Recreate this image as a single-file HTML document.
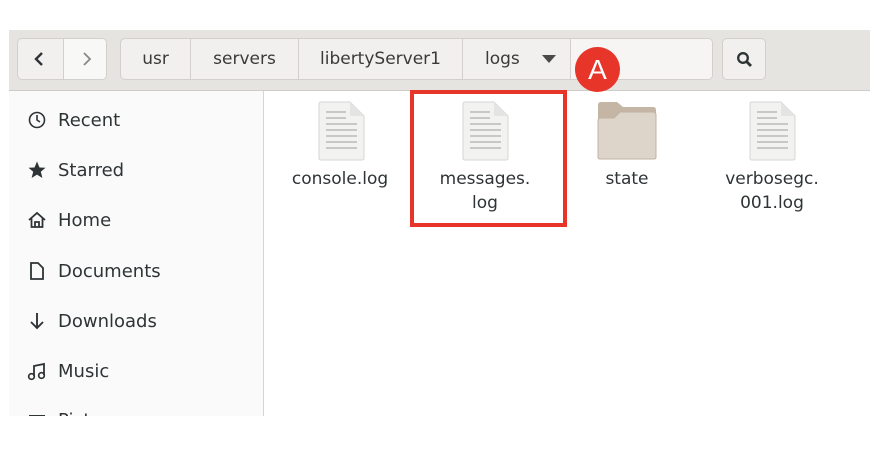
<!DOCTYPE html>
<html><head><style>
*{margin:0;padding:0;box-sizing:border-box}
body{width:870px;height:462px;background:#fff;position:relative;overflow:hidden;font-family:"DejaVu Sans","Liberation Sans",sans-serif;color:#2e3436}
.hdr{position:absolute;left:9px;top:30px;width:861px;height:61px;background:#e6e4e1;border-bottom:1px solid #cfcbc6}
.btn{position:absolute;top:8px;height:42px;background:#f1f0ee;border:1px solid #d3cfca;border-radius:5px}
.seg{position:absolute;top:0;height:40px;border-right:1px solid #d3cfca;font-size:17px;line-height:40px;text-align:center;color:#3a3a3a}
.side{position:absolute;left:9px;top:91px;width:255px;height:325px;background:#fafafa;border-right:1px solid #d8d4d0;overflow:hidden}
.it{position:absolute;left:0;font-size:18px;color:#2e3436}
.it span{position:absolute;left:49px;top:0;white-space:nowrap}
.it svg{position:absolute;left:18px;top:0}
.lbl{position:absolute;font-size:17px;text-align:center;line-height:24px;color:#2e3436}
</style></head><body>
<div class="hdr">
 <div class="btn" style="left:8px;width:90px;overflow:hidden">
  <div style="position:absolute;left:45px;top:0;width:45px;height:40px;background:#f8f8f7;border-left:1px solid #d3cfca"></div>
  <svg style="position:absolute;left:14px;top:12px" width="16" height="16"><path d="M10 2 L4 8 L10 14" stroke="#2e3436" stroke-width="2.4" fill="none"/></svg>
  <svg style="position:absolute;left:61px;top:12px" width="16" height="16"><path d="M5 2 L11 8 L5 14" stroke="#888" stroke-width="1.8" fill="none"/></svg>
 </div>
 <div class="btn" style="left:111px;width:593px;overflow:hidden">
  <div class="seg" style="left:0;width:70px">usr</div>
  <div class="seg" style="left:70px;width:108px">servers</div>
  <div class="seg" style="left:178px;width:164px">libertyServer1</div>
  <div class="seg" style="left:342px;width:108px;text-align:left;padding-left:22px">logs<svg style="position:absolute;left:79px;top:16px" width="14" height="9"><path d="M0 0 L14 0 L7 8Z" fill="#4a4a4a"/></svg></div>
  <div style="position:absolute;left:450px;top:0;width:143px;height:40px;background:#f6f5f4"></div>
 </div>
 <div class="btn" style="left:713px;width:44px">
  <svg style="position:absolute;left:13px;top:12px" width="18" height="18"><circle cx="7" cy="7" r="4.8" stroke="#2e3436" stroke-width="2.3" fill="none"/><path d="M10.5 10.5 L15 15" stroke="#2e3436" stroke-width="2.8"/></svg>
 </div>
</div>
<div class="side">
 <div class="it" style="top:19px"><svg width="20" height="20"><circle cx="10" cy="10" r="7.5" stroke="#2e3436" stroke-width="1.6" fill="none"/><path d="M10 5 V10 L13 12" stroke="#2e3436" stroke-width="1.6" fill="none"/></svg><span>Recent</span></div>
 <div class="it" style="top:69px"><svg width="20" height="20"><path d="M10 1.5 L12.5 7.5 L18.5 7.8 L13.8 11.8 L15.4 18 L10 14.6 L4.6 18 L6.2 11.8 L1.5 7.8 L7.5 7.5Z" fill="#2e3436"/></svg><span>Starred</span></div>
 <div class="it" style="top:119px"><svg width="20" height="20"><path d="M2 10 L10 3 L18 10 M4.5 8.5 V17 H15.5 V8.5 M8 17 V12 H12 V17" stroke="#2e3436" stroke-width="1.8" fill="none"/></svg><span>Home</span></div>
 <div class="it" style="top:170px"><svg width="20" height="20"><path d="M4 2 H11 L16 7 V18 H4Z" stroke="#2e3436" stroke-width="1.8" fill="none"/></svg><span>Documents</span></div>
 <div class="it" style="top:220px"><svg width="20" height="20"><path d="M10 2 V17 M4 11 L10 17 L16 11" stroke="#2e3436" stroke-width="1.9" fill="none"/></svg><span>Downloads</span></div>
 <div class="it" style="top:270px"><svg width="20" height="20"><path d="M7 15 V5 L17 3 V14" stroke="#2e3436" stroke-width="1.8" fill="none"/><circle cx="4.5" cy="15.5" r="2.8" stroke="#2e3436" stroke-width="1.7" fill="none"/><circle cx="14.5" cy="14.5" r="2.8" stroke="#2e3436" stroke-width="1.7" fill="none"/></svg><span>Music</span></div>
 <div class="it" style="top:319px"><svg width="20" height="20"><rect x="2" y="5" width="16" height="12" fill="#2e3436"/></svg><span>Pictures</span></div>
</div>
<svg style="position:absolute;left:318px;top:101px" width="47" height="60"><path d="M1 3 Q1 1 3 1 H32 L46 15 V57 Q46 59 44 59 H3 Q1 59 1 57Z" fill="#f2f2f1" stroke="#d6d6d4"/><path d="M32 1 V15 H46" fill="#e4e4e2"/><g stroke="#c8c8c6" stroke-width="2"><path d="M8 11H28M8 17H28M8 23H39M8 29H39M8 35H39M8 41H39M8 47H39"/></g></svg>
<svg style="position:absolute;left:462px;top:101px" width="47" height="60"><path d="M1 3 Q1 1 3 1 H32 L46 15 V57 Q46 59 44 59 H3 Q1 59 1 57Z" fill="#f2f2f1" stroke="#d6d6d4"/><path d="M32 1 V15 H46" fill="#e4e4e2"/><g stroke="#c8c8c6" stroke-width="2"><path d="M8 11H28M8 17H28M8 23H39M8 29H39M8 35H39M8 41H39M8 47H39"/></g></svg>
<svg style="position:absolute;left:749px;top:101px" width="47" height="60"><path d="M1 3 Q1 1 3 1 H32 L46 15 V57 Q46 59 44 59 H3 Q1 59 1 57Z" fill="#f2f2f1" stroke="#d6d6d4"/><path d="M32 1 V15 H46" fill="#e4e4e2"/><g stroke="#c8c8c6" stroke-width="2"><path d="M8 11H28M8 17H28M8 23H39M8 29H39M8 35H39M8 41H39M8 47H39"/></g></svg>
<svg style="position:absolute;left:597px;top:101px" width="60" height="60"><path d="M1 4 Q1 1 4 1 H20 L26 6 H56 Q59 6 59 9 V56 Q59 58 57 58 H3 Q1 58 1 56Z" fill="#c4b5a5"/><path d="M1 20 Q1 17 4 17 H17 L23 11 H56 Q59 11 59 14 V56 Q59 58 57 58 H3 Q1 58 1 56Z" fill="#ddd4ca" stroke="#c2b3a3"/></svg>
<div class="lbl" style="left:280px;top:167px;width:120px">console.log</div>
<div class="lbl" style="left:425px;top:167px;width:120px">messages.<br>log</div>
<div class="lbl" style="left:567px;top:167px;width:120px">state</div>
<div class="lbl" style="left:712px;top:167px;width:120px">verbosegc.<br>001.log</div>
<div style="position:absolute;left:410px;top:90px;width:157px;height:137px;border:4px solid #e8352a"></div>
<div style="position:absolute;left:575px;top:47px;width:45px;height:45px;border-radius:50%;background:#e8352a;color:#fff;font-family:'Liberation Sans',sans-serif;font-size:28px;line-height:45px;text-align:center">A</div>
</body></html>
